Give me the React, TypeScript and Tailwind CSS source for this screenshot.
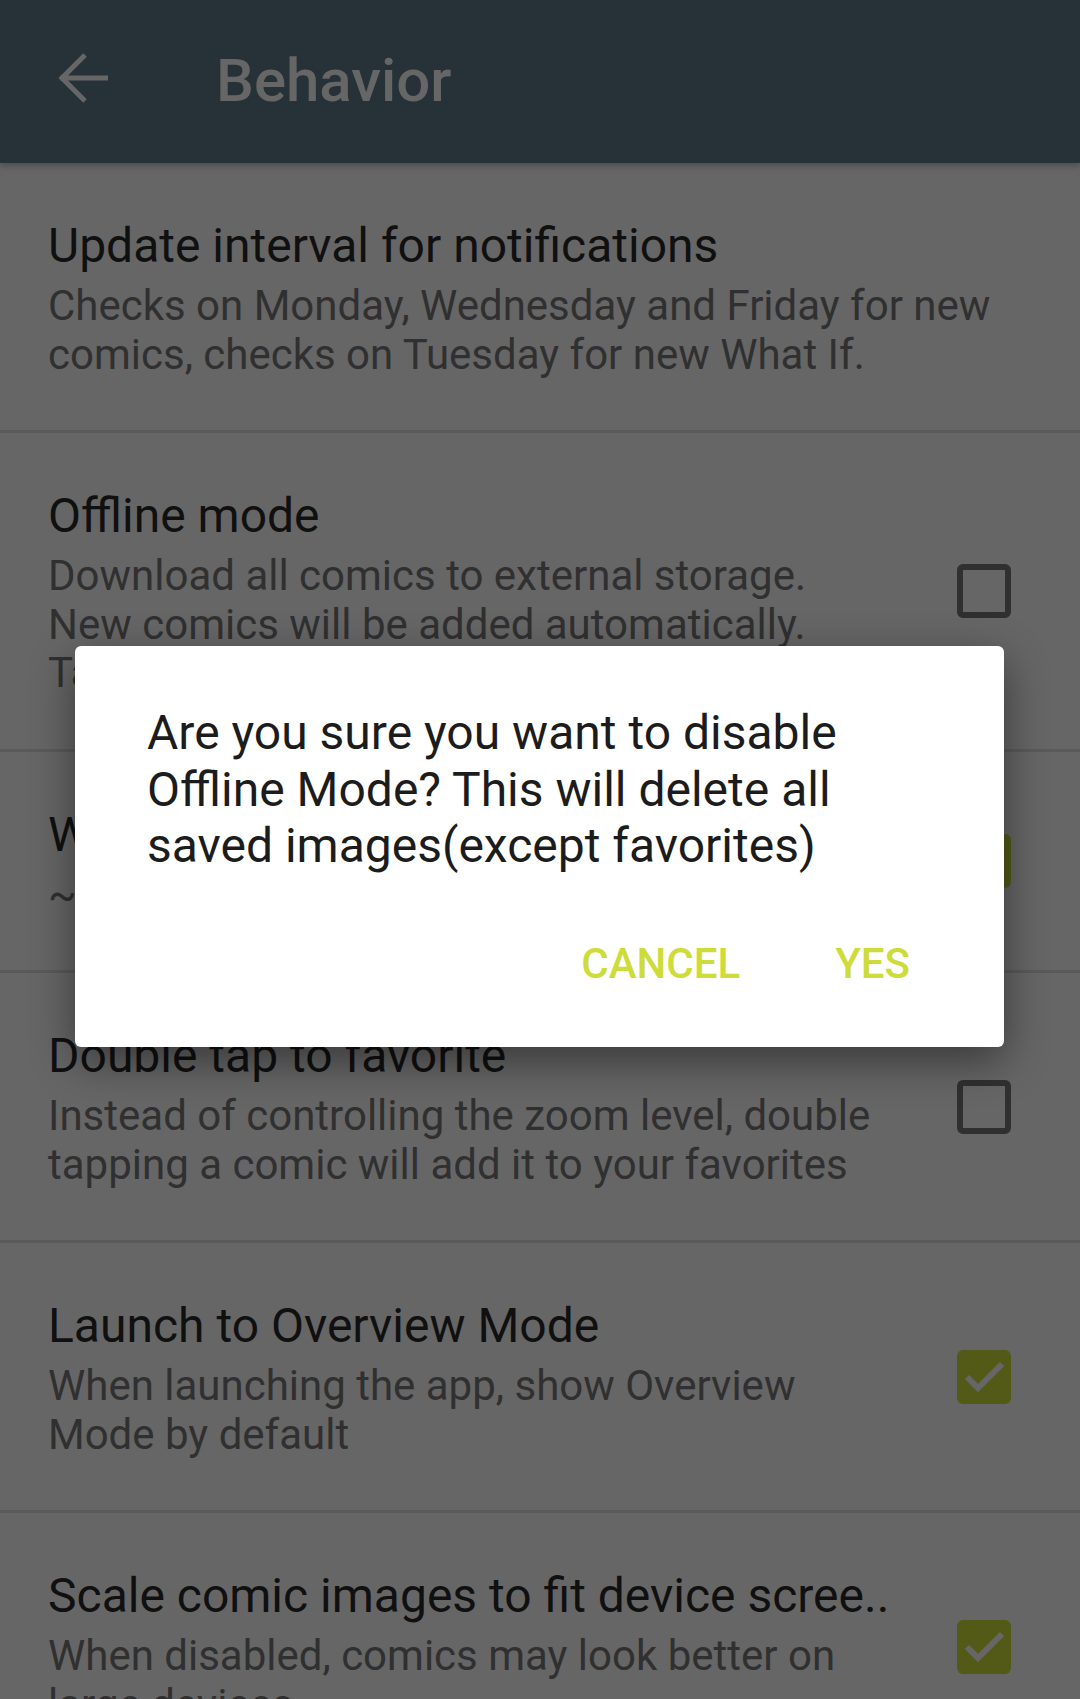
import React from "react";

type Row = {
  title: string;
  summary: React.ReactNode;
  checkbox?: "on" | "off";
};

const rows: Row[] = [
  {
    title: "Update interval for notifications",
    summary:
      "Checks on Monday, Wednesday and Friday for new comics, checks on Tuesday for new What If.",
  },
  {
    title: "Offline mode",
    summary:
      "Download all comics to external storage. New comics will be added automatically. Takes about 400 MB of space.",
    checkbox: "off",
  },
  {
    title: "What If offline mode",
    summary: "~20 MB needed",
    checkbox: "on",
  },
  {
    title: "Double tap to favorite",
    summary:
      "Instead of controlling the zoom level, double tapping a comic will add it to your favorites",
    checkbox: "off",
  },
  {
    title: "Launch to Overview Mode",
    summary: "When launching the app, show Overview Mode by default",
    checkbox: "on",
  },
  {
    title: "Scale comic images to fit device scree..",
    summary: "When disabled, comics may look better on large devices",
    checkbox: "on",
  },
];

function Checkbox({ checked }: { checked: boolean }) {
  if (checked) {
    return (
      <div className="w-[54px] h-[54px] rounded-[6px] bg-[#535a18]">
        <svg width="54" height="54" viewBox="0 0 54 54">
          <path
            d="M10 27 L21 38 L45 14"
            fill="none"
            stroke="#666666"
            strokeWidth="6"
          />
        </svg>
      </div>
    );
  }
  return (
    <div className="w-[54px] h-[54px] rounded-[6px] border-[6px] border-[#303030]" />
  );
}

function PrefRow({ row }: { row: Row }) {
  return (
    <div
      className={
        row.checkbox
          ? "flex items-center pl-[48px] pr-[69px] border-b-[3px] border-[#5a5a5a]"
          : "flex items-center pl-[48px] pr-[48px] border-b-[3px] border-[#5a5a5a]"
      }
    >
      <div className="flex-1 min-w-0 py-[51px]">
        <div className="text-[48px] leading-[64px] text-[#101010] whitespace-nowrap">
          {row.title}
        </div>
        <div className="mt-[4px] text-[42px] leading-[48.5px] text-[#303030]">
          {row.summary}
        </div>
      </div>
      {row.checkbox && (
        <div className="ml-[70px] shrink-0">
          <Checkbox checked={row.checkbox === "on"} />
        </div>
      )}
    </div>
  );
}

export default function App() {
  return (
    <div className="relative w-[1080px] h-[1699px] overflow-hidden bg-[#666666] font-['Roboto',sans-serif]">
      <header className="relative z-10 flex items-start h-[163px] bg-[#263238] shadow-[0_3px_6px_rgba(0,0,0,0.25)]">
        <svg
          className="mt-[42px] ml-[48px] shrink-0"
          width="72"
          height="72"
          viewBox="0 0 72 72"
        >
          <path
            d="M12 36 H60 M37 13 L14 36 L37 59"
            fill="none"
            stroke="#666666"
            strokeWidth="5"
          />
        </svg>
        <div className="mt-[45px] ml-[96px] text-[60px] leading-[72px] font-medium text-[#666666]">
          Behavior
        </div>
      </header>

      <div>
        {rows.map((r, i) => (
          <PrefRow key={i} row={r} />
        ))}
      </div>

      <div className="absolute left-[75px] top-[646px] w-[929px] bg-white rounded-[6px] shadow-[0_14px_44px_rgba(0,0,0,0.45)]">
        <p className="pt-[59px] pl-[72px] pr-[74px] text-[48px] leading-[56.5px] text-[#1c1c1c]">
          Are you sure you want to disable Offline Mode? This will delete all
          saved images(except favorites)
        </p>
        <div className="flex justify-end gap-[47px] pt-[65px] pb-[59px] pr-[70px]">
          <span className="px-[24px] text-[42px] leading-[48px] font-medium text-[#cddc39]">
            CANCEL
          </span>
          <span className="px-[24px] text-[42px] leading-[48px] font-medium text-[#cddc39]">
            YES
          </span>
        </div>
      </div>
    </div>
  );
}
